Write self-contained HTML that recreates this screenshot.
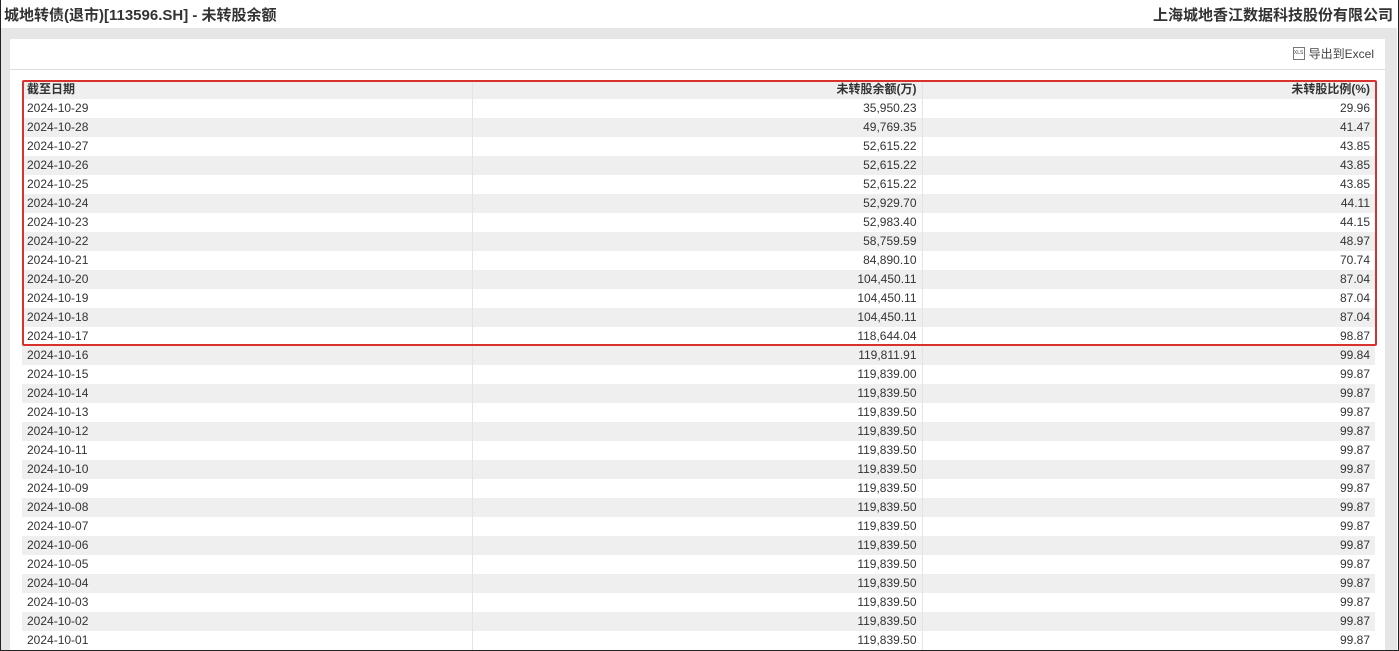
<!DOCTYPE html>
<html><head><meta charset="utf-8"><style>
*{margin:0;padding:0;box-sizing:border-box}
body{width:1399px;height:651px;overflow:hidden;background:#fff;font-family:"Liberation Sans","Noto Sans CJK SC",sans-serif;color:#333;position:relative}
.frame{position:absolute;left:0;top:0;width:1399px;height:651px;border:1px solid #222;border-top:none}
.title{position:absolute;left:4px;top:4px;font-size:15px;font-weight:bold;color:#333}
.co{position:absolute;right:6px;top:4px;font-size:15px;font-weight:bold;color:#333}
.band{position:absolute;left:1px;top:28px;width:1396px;height:622px;background:#e6e6e6}
.panel{position:absolute;left:10px;top:39px;width:1375px;height:612px;background:#fff}
.hd{position:absolute;left:0;top:0;width:100%;height:31px;border-bottom:1px solid #ddd}
.xl{position:absolute;right:11px;top:8px;font-size:12px;color:#444;line-height:14px}
.xl i{display:inline-block;width:12px;height:13px;border:1px solid #777;vertical-align:top;margin-right:4px;font-size:5px;font-style:normal;line-height:11px;text-align:center}
table{position:absolute;left:12px;top:41px;width:1353px;border-collapse:collapse;font-size:12px}
td{height:19px;padding:0 5px;line-height:19px}
td+td{text-align:right;border-left:1px solid #e4e4e4}
tr:nth-child(odd){background:#efefef}
tr:first-child td{font-weight:bold;color:#333}
.red{position:absolute;left:22px;top:80px;width:1355px;height:266px;border:2px solid #d9322e;border-radius:2px}
</style></head><body>
<div class="frame"></div>
<div class="title">城地转债(退市)[113596.SH] - 未转股余额</div>
<div class="co">上海城地香江数据科技股份有限公司</div>
<div class="band"></div>
<div class="panel"><div class="hd"><div class="xl"><i>XLS</i>导出到Excel</div></div>
<table>
<colgroup><col style="width:450px"><col style="width:450px"><col></colgroup>
<tr><td>截至日期</td><td>未转股余额(万)</td><td>未转股比例(%)</td></tr>
<tr><td>2024-10-29</td><td>35,950.23</td><td>29.96</td></tr>
<tr><td>2024-10-28</td><td>49,769.35</td><td>41.47</td></tr>
<tr><td>2024-10-27</td><td>52,615.22</td><td>43.85</td></tr>
<tr><td>2024-10-26</td><td>52,615.22</td><td>43.85</td></tr>
<tr><td>2024-10-25</td><td>52,615.22</td><td>43.85</td></tr>
<tr><td>2024-10-24</td><td>52,929.70</td><td>44.11</td></tr>
<tr><td>2024-10-23</td><td>52,983.40</td><td>44.15</td></tr>
<tr><td>2024-10-22</td><td>58,759.59</td><td>48.97</td></tr>
<tr><td>2024-10-21</td><td>84,890.10</td><td>70.74</td></tr>
<tr><td>2024-10-20</td><td>104,450.11</td><td>87.04</td></tr>
<tr><td>2024-10-19</td><td>104,450.11</td><td>87.04</td></tr>
<tr><td>2024-10-18</td><td>104,450.11</td><td>87.04</td></tr>
<tr><td>2024-10-17</td><td>118,644.04</td><td>98.87</td></tr>
<tr><td>2024-10-16</td><td>119,811.91</td><td>99.84</td></tr>
<tr><td>2024-10-15</td><td>119,839.00</td><td>99.87</td></tr>
<tr><td>2024-10-14</td><td>119,839.50</td><td>99.87</td></tr>
<tr><td>2024-10-13</td><td>119,839.50</td><td>99.87</td></tr>
<tr><td>2024-10-12</td><td>119,839.50</td><td>99.87</td></tr>
<tr><td>2024-10-11</td><td>119,839.50</td><td>99.87</td></tr>
<tr><td>2024-10-10</td><td>119,839.50</td><td>99.87</td></tr>
<tr><td>2024-10-09</td><td>119,839.50</td><td>99.87</td></tr>
<tr><td>2024-10-08</td><td>119,839.50</td><td>99.87</td></tr>
<tr><td>2024-10-07</td><td>119,839.50</td><td>99.87</td></tr>
<tr><td>2024-10-06</td><td>119,839.50</td><td>99.87</td></tr>
<tr><td>2024-10-05</td><td>119,839.50</td><td>99.87</td></tr>
<tr><td>2024-10-04</td><td>119,839.50</td><td>99.87</td></tr>
<tr><td>2024-10-03</td><td>119,839.50</td><td>99.87</td></tr>
<tr><td>2024-10-02</td><td>119,839.50</td><td>99.87</td></tr>
<tr><td>2024-10-01</td><td>119,839.50</td><td>99.87</td></tr>
</table></div>
<div class="red"></div>
<div class="frame"></div>
</body></html>
